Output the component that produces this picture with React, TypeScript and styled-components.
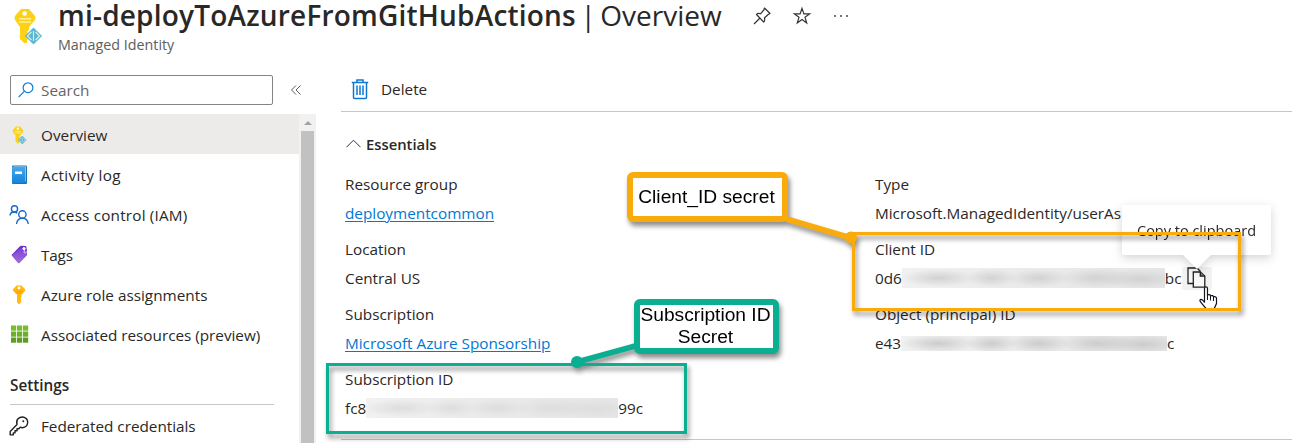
import React from "react";
import styled, { createGlobalStyle } from "styled-components";

const Global = createGlobalStyle`
  * { box-sizing: border-box; }
  body { margin: 0; background: #fff; overflow: hidden; }
`;

const Page = styled.div`
  position: relative;
  width: 1292px;
  height: 443px;
  overflow: hidden;
  display: flex;
  flex-direction: column;
  background: #fff;
  color: #292827;
  font: 15.3px/20px "Open Sans", "Noto Sans", sans-serif;
  white-space: nowrap;
`;

/* ---------- header ---------- */
const Header = styled.header`
  display: flex;
  height: 66px;
  flex: none;
  padding-left: 11px;
`;
const HeaderIcon = styled.div`
  width: 47px;
  padding-top: 6px;
`;
const TitleRow = styled.div`
  display: flex;
  align-items: center;
  height: 32px;
`;
const Title = styled.h1`
  margin: 0;
  width: 664px;
  font-size: 28px;
  line-height: 30px;
  height: 32px;
  font-weight: 400;
`;
const TitleName = styled.span`
  font-weight: 600;
  letter-spacing: 0.2px;
`;
const TitleBar = styled.span`
  margin: 0 -2.8px;
`;
const HeaderActions = styled.div`
  display: flex;
  align-items: center;
  gap: 21px;
  padding-left: 31px;
`;
const Subtitle = styled.div`
  color: #605e5c;
  font-size: 14.3px;
  line-height: 20px;
  padding-top: 3px;
`;

/* ---------- body ---------- */
const Body = styled.div`
  display: flex;
  flex: 1;
  min-height: 0;
`;
const Sidebar = styled.aside`
  width: 316px;
  flex: none;
  padding-top: 9px;
`;
const SearchRow = styled.div`
  display: flex;
  align-items: center;
  height: 30px;
  padding-left: 10px;
  margin-bottom: 9px;
  gap: 17px;
`;
const SearchBox = styled.div`
  display: flex;
  align-items: center;
  gap: 7px;
  width: 263px;
  height: 30px;
  padding-left: 7px;
  border: 1px solid #868482;
  border-radius: 2px;
  color: #666462;
`;
const NavArea = styled.div`
  display: flex;
  height: 329px;
`;
const Nav = styled.nav`
  width: 299px;
`;
const NavItem = styled.div<{ $active?: boolean; $track?: number }>`
  display: flex;
  align-items: center;
  height: 40px;
  padding: 1px 0 0 9px;
  gap: 12px;
  letter-spacing: ${(p) => p.$track ?? 0}px;
  background: ${(p) => (p.$active ? "#edebe9" : "transparent")};
  svg { flex: none; }
`;
const NavHeading = styled.div`
  margin: 0 0 0 10px;
  width: 264px;
  height: 51px;
  padding-top: 21px;
  border-bottom: 1px solid #c8c6c4;
  font-weight: 600;
  font-size: 15.3px;
`;
const ScrollTrack = styled.div`
  width: 17px;
  background: #f1f1f1;
  display: flex;
  flex-direction: column;
  align-items: center;
`;
const ScrollArrow = styled.div`
  margin: 7px 0 6px;
  border: 4px solid transparent;
  border-top: 0;
  border-bottom: 4px solid #a3a3a3;
`;
const ScrollThumb = styled.div`
  width: 13px;
  flex: 1;
  background: #c1c1c1;
`;

const Main = styled.main`
  flex: 1;
  margin-left: 25px;
`;
const Toolbar = styled.div`
  display: flex;
  align-items: center;
  gap: 12px;
  height: 46px;
  padding: 1px 0 0 10px;
  border-bottom: 1px solid #c8c6c4;
`;
const EssentialsHead = styled.div`
  display: flex;
  align-items: center;
  gap: 5px;
  height: 61px;
  padding: 2px 0 0 5px;
  font-weight: 600;
  font-size: 14.8px;
`;
const Columns = styled.div`
  display: grid;
  grid-template-columns: 530px 1fr;
  height: 267px;
  padding-left: 4px;
  border-bottom: 1px solid #c8c6c4;
`;
const Field = styled.div`
  height: 65px;
  display: flex;
  flex-direction: column;
  gap: 9px;
  padding-top: 1px;
`;
const FieldValue = styled.div`
  display: flex;
  align-items: center;
  height: 20px;
`;
const Link = styled.a`
  color: #0078d4;
  text-decoration: underline;
  text-decoration-thickness: 1px;
  text-underline-offset: 2px;
`;
const Redacted = styled.span<{ $w: number; $h: number; $tone: string }>`
  width: ${(p) => p.$w}px;
  height: ${(p) => p.$h}px;
  flex: none;
  background:
    radial-gradient(ellipse 38px 9px at 14% 50%, ${(p) => p.$tone}, transparent),
    radial-gradient(ellipse 26px 9px at 34% 50%, ${(p) => p.$tone}, transparent),
    radial-gradient(ellipse 32px 9px at 52% 50%, ${(p) => p.$tone}, transparent),
    radial-gradient(ellipse 38px 10px at 74% 50%, ${(p) => p.$tone}, transparent),
    radial-gradient(ellipse 40px 10px at 91% 55%, ${(p) => p.$tone}, transparent),
    linear-gradient(90deg, #f1f1f1, #ebebeb 40%, #e6e6e6);
`;
const CopyButton = styled.span`
  position: relative;
  width: 30px;
  height: 23px;
  flex: none;
  background: #f3f2f1;
  border-radius: 2px;
  display: flex;
  padding-left: 5px;
`;

/* ---------- floating layers ---------- */
const Tooltip = styled.div`
  position: absolute;
  left: 1122px;
  top: 205px;
  width: 149px;
  height: 50px;
  padding: 16px 0 0 15px;
  background: #fff;
  border-radius: 2px;
  font-size: 14.5px;
  filter: drop-shadow(0 3px 5px rgba(0, 0, 0, 0.17));
  &::after {
    content: "";
    position: absolute;
    left: 61px;
    top: 50px;
    border: 14px solid transparent;
    border-bottom: 0;
    border-top-color: #fff;
  }
`;
const Layer = styled.svg`
  position: absolute;
  left: 0;
  top: 0;
  overflow: visible;
`;
const Annotations = styled.div`
  position: absolute;
  inset: 0;
  filter: drop-shadow(2px 4px 2.5px rgba(0, 0, 0, 0.45));
`;
const Outline = styled.div<{ $x: number; $y: number; $w: number; $h: number; $color: string }>`
  position: absolute;
  left: ${(p) => p.$x}px;
  top: ${(p) => p.$y}px;
  width: ${(p) => p.$w}px;
  height: ${(p) => p.$h}px;
  border: 3px solid ${(p) => p.$color};
`;
const Callout = styled(Outline)`
  display: flex;
  align-items: center;
  justify-content: center;
  text-align: center;
  border-width: 6px;
  border-radius: 6px;
  background: #fff;
  color: #000;
  padding: 0 2px 1px 0;
  font: 19.2px/22px "Liberation Sans", Arial, sans-serif;
`;

const YELLOW = "#f9ab0b";
const GREEN = "#0aae91";

/* ---------- icons ---------- */
const IdentityIcon = ({ w, h }: { w: number; h: number }) => (
  <svg width={w} height={h} viewBox="0 0 32 40">
    <path d="M10 3h8l6 7q1 2 0 4l-6 7v3l-2 2 2 2-2 2 2 2-2 2v3l-3 0-4-4V21L4 14q-1-2 0-4z" fill="#fcd116" />
    <circle cx="13.6" cy="7.5" r="2.3" fill="#fff" />
    <path d="M8 12.7h12M8 16h12" stroke="#fff0a0" strokeWidth="1.6" />
    <path d="M22.5 22l8 8-8 8-8-8z" fill="#59b4d9" stroke="#59b4d9" strokeWidth="1" strokeLinejoin="round" />
    <path d="M22.5 25v10M20.500 26l-4 4 4 4M24.500 26l4 4-4 4" stroke="#d8f0d0" strokeWidth="1.2" fill="none" />
  </svg>
);
const LogIcon = () => (
  <svg width="20" height="20" viewBox="0 0 20 20">
    <defs>
      <linearGradient id="log" x1="0" y1="0" x2="0" y2="1">
        <stop stopColor="#44a8ec" /><stop offset="1" stopColor="#1684da" />
      </linearGradient>
    </defs>
    <rect x="3" y="0.500" width="15" height="18.500" rx="1" fill="#1a73b8" />
    <path d="M4.500 1.500H17v15H4.500z" fill="#d5ecfb" />
    <path d="M3 2h13.500V18H4q-1 0-1-1z" fill="url(#log)" />
    <path d="M6 6.500h7v2.500H6z" fill="#fff" />
  </svg>
);
const PeopleIcon = () => (
  <svg width="20" height="20" viewBox="0 0 20 20" fill="none" stroke="#1b66d2" strokeWidth="1.4">
    <circle cx="5.500" cy="3.900" r="3.100" />
    <path d="M1 10.500q.5-3.500 4-3.500 2 0 3.200 1.200" />
    <circle cx="13.400" cy="9.500" r="3.700" />
    <path d="M7.500 19q.8-5.700 5.900-5.700t5.900 5.700" />
  </svg>
);
const TagIcon = () => (
  <svg width="20" height="20" viewBox="0 0 20 20">
    <defs>
      <linearGradient id="tag" x1="0" y1="0" x2="0" y2="1">
        <stop stopColor="#7a40d8" /><stop offset="1" stopColor="#a070d8" />
      </linearGradient>
    </defs>
    <path d="M2.500 10L11 1.200q.8-.6 1.800-.5l3.700.3q1 .2 1 1.200v5.700L9.500 18z" fill="#6b2fc9" />
    <path d="M3 10.500L11.500 3 18 4v5.500q0 .8-.5 1.300L10.500 18q-.8.700-1.500 0z" fill="url(#tag)" />
    <circle cx="15" cy="3.600" r="1.500" fill="#fff" />
    <path d="M15.500 5q-1 2.500 0 3 1.600.4 2-1.500" stroke="#f0e6ff" fill="none" strokeWidth=".8" />
  </svg>
);
const KeyIcon = () => (
  <svg width="20" height="20" viewBox="0 0 20 20">
    <path d="M7.500 .5h5l3.500 3.500q.6 1 0 2L12.500 9.500V12l-.7 1 .7 1.200-.7 1.200.7 1-2 2.600h-1L8 17V9.500L4.200 6q-.6-1 0-2z" fill="#ffb90f" />
    <path d="M6.500 6.200h7M6.500 8h7" stroke="#ff9d0a" strokeWidth="1" />
    <circle cx="10" cy="2.900" r="1.400" fill="#fff" />
  </svg>
);
const GridIcon = () => (
  <svg width="20" height="20" viewBox="0 0 20 20">
    {[0, 1, 2].map((r) => [0, 1, 2].map((c) => (
      <rect key={`${r}${c}`} x={2 + c * 6} y={0.5 + r * 6} width="5.2" height="5.2" fill={["#76bc2d", "#6cb029", "#5e9c23"][r]} />
    )))}
  </svg>
);
const OutlineKeyIcon = () => (
  <svg width="20" height="20" viewBox="0 0 20 20" fill="none" stroke="#222" strokeWidth="1.4">
    <path d="M8 8.500Q7 5 9 2.800 11 .9 13.700 1q5 .8 5 5.500-.4 4.700-5.200 5.200-1.300 0-2.300-.5L9.800 12.700H8v2H6v2.200H4.300v2H1.200v-3.500z" strokeLinejoin="round" />
    <circle cx="14.300" cy="5.300" r="1" fill="#222" stroke="none" />
  </svg>
);
const SearchIcon = () => (
  <svg width="16" height="16" viewBox="0 0 16 16" fill="none" stroke="#0f7bd4" strokeWidth="1.2">
    <circle cx="10" cy="5.700" r="4.900" />
    <path d="M6.500 9.200L.6 15.200" />
  </svg>
);
const CollapseIcon = () => (
  <svg width="12" height="12" viewBox="0 0 12 12" fill="none" stroke="#605e5c">
    <path d="M6 1.500L1.500 6 6 10.500M10.500 1.500L6 6l4.500 4.500" />
  </svg>
);
const PinIcon = () => (
  <svg width="18" height="18" viewBox="0 0 18 18" fill="none" stroke="#333" strokeWidth="1.2">
    <path d="M11.500 1l5.500 5.500-1.800 1L11.400 11q.9 2.700-.7 4L3.500 7.500q1.300-1.600 4-.7L10.800 3zM7 11L1 17" strokeLinejoin="round" />
  </svg>
);
const StarIcon = () => (
  <svg width="20" height="20" viewBox="0 0 20 20" fill="none" stroke="#333" strokeWidth="1.2">
    <path d="M10 2.400l1.900 5.500h5.700l-4.600 3.400 1.700 5.600L10 13.500l-4.700 3.400 1.700-5.600L2.400 7.900h5.700z" />
  </svg>
);
const DotsIcon = () => (
  <svg width="16" height="4" viewBox="0 0 16 4" fill="#333">
    <circle cx="2" cy="2" r=".9" /><circle cx="8" cy="2" r=".9" /><circle cx="14" cy="2" r=".9" />
  </svg>
);
const TrashIcon = () => (
  <svg width="18" height="21" viewBox="0 0 18 21" fill="none" stroke="#0f78d4" strokeWidth="1.5">
    <path d="M.8 3.500h16.400M6 3V1h6v2M2.500 3.500v15q0 1 1 1h11q1 0 1-1v-15" />
    <path d="M6 6.500v9.500M9 6.500v9.500M12 6.500v9.500" />
  </svg>
);
const ChevronUp = () => (
  <svg width="15" height="9" viewBox="0 0 15 9" fill="none" stroke="#333">
    <path d="M.5 8.200l7-7 7 7" />
  </svg>
);
const CopyIcon = () => (
  <svg width="19" height="21" viewBox="0 0 19 21" fill="#f8f8f8" stroke="#222" strokeWidth="1.300">
    <path d="M8 16.500H1V1h9l3.500 3.500" />
    <path d="M6.300 5h7l4.500 4v11.200H6.300z" />
    <path d="M13.300 5v4.200h4.500" fill="#777" />
  </svg>
);

const NAV = [
  { label: "Overview", icon: <IdentityIcon w={20} h={20} />, active: true },
  { label: "Activity log", icon: <LogIcon />, track: 0.3 },
  { label: "Access control (IAM)", icon: <PeopleIcon />, track: 0.18 },
  { label: "Tags", icon: <TagIcon />, track: -0.2 },
  { label: "Azure role assignments", icon: <KeyIcon /> },
  { label: "Associated resources (preview)", icon: <GridIcon />, track: -0.02 },
];

export default function App() {
  return (
    <Page>
      <Global />
      <Header>
        <HeaderIcon><IdentityIcon w={32} h={40} /></HeaderIcon>
        <div>
          <TitleRow>
            <Title><TitleName>mi-deployToAzureFromGitHubActions</TitleName> <TitleBar>|</TitleBar> Overview</Title>
            <HeaderActions><PinIcon /><StarIcon /><DotsIcon /></HeaderActions>
          </TitleRow>
          <Subtitle>Managed Identity</Subtitle>
        </div>
      </Header>
      <Body>
        <Sidebar>
          <SearchRow>
            <SearchBox><SearchIcon />Search</SearchBox>
            <CollapseIcon />
          </SearchRow>
          <NavArea>
            <Nav>
              {NAV.map((n) => (
                <NavItem key={n.label} $active={n.active} $track={n.track}>{n.icon}{n.label}</NavItem>
              ))}
              <NavHeading>Settings</NavHeading>
              <NavItem $track={-0.02}><OutlineKeyIcon />Federated credentials</NavItem>
            </Nav>
            <ScrollTrack><ScrollArrow /><ScrollThumb /></ScrollTrack>
          </NavArea>
        </Sidebar>
        <Main>
          <Toolbar><TrashIcon />Delete</Toolbar>
          <EssentialsHead><ChevronUp />Essentials</EssentialsHead>
          <Columns>
            <div>
              <Field>Resource group<FieldValue><Link>deploymentcommon</Link></FieldValue></Field>
              <Field>Location<FieldValue>Central US</FieldValue></Field>
              <Field>Subscription<FieldValue><Link>Microsoft Azure Sponsorship</Link></FieldValue></Field>
              <Field>Subscription ID<FieldValue>fc8<Redacted $w={252} $h={20} $tone="#dddddd" />99c</FieldValue></Field>
            </div>
            <div>
              <Field>Type<FieldValue>Microsoft.ManagedIdentity/userAs</FieldValue></Field>
              <Field>Client ID<FieldValue>0d6<Redacted $w={263} $h={20} $tone="#d2d2d2" />bc<CopyButton><CopyIcon /></CopyButton></FieldValue></Field>
              <Field>Object (principal) ID<FieldValue>e43<Redacted $w={266} $h={15} $tone="#cccccc" />c</FieldValue></Field>
            </div>
          </Columns>
        </Main>
      </Body>

      <Tooltip>Copy to clipboard</Tooltip>
      <Layer width="1292" height="443">
        <path
          d="M1204.500 302.500V288.500q0-1.700 1.500-1.700t1.500 1.700v6.500q2.500-1 3 .8 2.500-.8 3 1 3-.6 3 1.800v4.900l-2 4.500v2.500h-8.500v-2l-5.500-6.500q-1.500-2.500.8-2.700 1.500 0 3.200 3.200z"
          fill="#fff" stroke="#111322" strokeWidth="1.200" />
        <path d="M1207.500 294v6M1210.500 296v4.500M1213.500 297v4" stroke="#111322" />
      </Layer>
      <Annotations>
        <Outline $x={852} $y={232} $w={389} $h={79} $color={YELLOW} />
        <Outline $x={326} $y={363} $w={361} $h={71} $color={GREEN} />
        <Layer width="1292" height="443">
          <path d="M785 218.500L851 238" stroke={YELLOW} strokeWidth="5.500" />
          <circle cx="851" cy="237.500" r="6" fill={YELLOW} />
          <path d="M637 345.500L577 362" stroke={GREEN} strokeWidth="5.500" />
          <circle cx="577" cy="362" r="6" fill={GREEN} />
        </Layer>
        <Callout $x={627} $y={172} $w={161} $h={50} $color={YELLOW}>Client_ID secret</Callout>
        <Callout $x={634} $y={299} $w={145} $h={55} $color={GREEN}>Subscription ID<br />Secret</Callout>
      </Annotations>
    </Page>
  );
}
